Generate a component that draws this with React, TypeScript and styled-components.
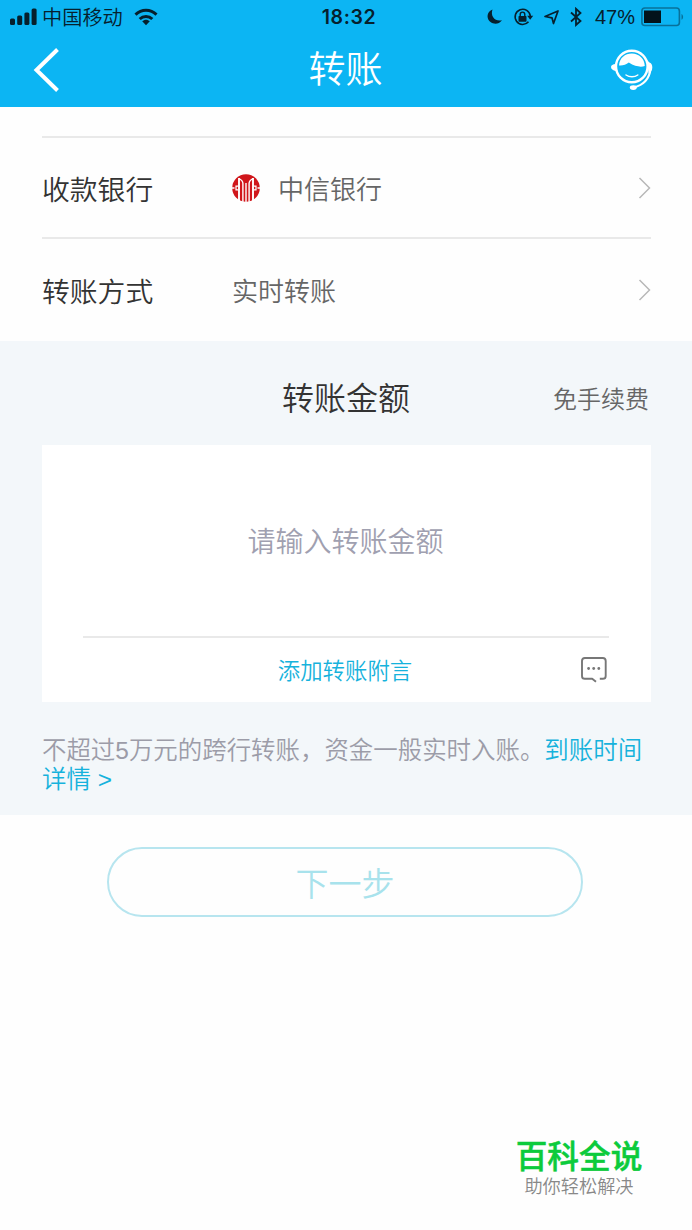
import React from "react";
import styled, { createGlobalStyle } from "styled-components";

const Global = createGlobalStyle`
  *, *::before, *::after { box-sizing: border-box; }
  body {
    margin: 0;
    background: #fff;
    font-family: "Noto Sans CJK SC", sans-serif;
    font-weight: 350;
  }
`;

const Screen = styled.div`
  width: 692px;
  height: 1230px;
  display: flex;
  flex-direction: column;
  background: #fefefe;
  overflow: hidden;
`;

const Header = styled.header`
  height: 107px;
  background: #0cb5f3;
`;

const StatusBar = styled.div`
  height: 34px;
  display: grid;
  grid-template-columns: 1fr auto 1fr;
  align-items: center;
  padding: 0 8px 0 10px;
  color: #06202d;
`;

const StatusGroup = styled.div<{ $end?: boolean }>`
  display: flex;
  align-items: center;
  justify-content: ${(p) => (p.$end ? "flex-end" : "flex-start")};
`;

const Carrier = styled.span`
  font-size: 20.2px;
  line-height: 34px;
  margin: 0 11px 0 4px;
  font-weight: 350;
`;

const Clock = styled.span`
  font: 600 19.5px/34px Inter, sans-serif;
  letter-spacing: 0.6px;
  padding-left: 4px;
`;

const Percent = styled.span`
  font: 400 20px/34px "Liberation Sans", sans-serif;
  margin: 0 6px 0 12px;
`;

const NavBar = styled.div`
  height: 70px;
  display: grid;
  grid-template-columns: 1fr auto 1fr;
  align-items: center;
  padding: 0 39px 0 33px;
`;

const Title = styled.h1`
  margin: 0;
  padding: 0 0 4px 5px;
  color: #fff;
  font-size: 37px;
  line-height: 66px;
  font-weight: 350;
`;

const NavIcon = styled.div<{ $end?: boolean }>`
  display: flex;
  padding-top: ${(p) => (p.$end ? 1 : 2)}px;
  justify-content: ${(p) => (p.$end ? "flex-end" : "flex-start")};
`;

const Form = styled.section`
  height: 234px;
  padding: 29px 41px 0 42px;
`;

const Row = styled.div`
  height: 101px;
  display: flex;
  align-items: center;
  border-top: 2px solid #e9e9e9;

  &:last-child {
    height: 103px;
  }
`;

const Label = styled.span`
  width: 190px;
  font-size: 27.8px;
  color: #333;
`;

const Value = styled.span`
  flex: 1;
  display: flex;
  align-items: center;
  gap: 18px;
  font-size: 26px;
  color: #666;
`;

const AmountSection = styled.section`
  height: 474px;
  padding: 0 41px 0 42px;
  background: #f3f7fa;
`;

const AmountHead = styled.div`
  height: 104px;
  display: grid;
  grid-template-columns: 1fr auto 1fr;
  align-items: center;
  padding: 6px 2px 0 1px;
`;

const AmountTitle = styled.h2`
  grid-column: 2;
  margin: 0;
  font-size: 32px;
  font-weight: 350;
  color: #333;
`;

const Fee = styled.span`
  justify-self: end;
  padding-top: 3px;
  font-size: 24px;
  color: #666;
`;

const Card = styled.div`
  height: 257px;
  padding: 0 42px 0 41px;
  background: #fff;
`;

const AmountField = styled.div`
  height: 193px;
  display: flex;
  align-items: center;
  justify-content: center;
  padding: 0 1px 1px 0;
  border-bottom: 2px solid #e9e9e9;
  font-size: 28px;
  color: #a0a0b0;
`;

const NoteRow = styled.div`
  height: 64px;
  display: grid;
  grid-template-columns: 1fr auto 1fr;
  align-items: center;
  padding-right: 2px;
`;

const NoteLink = styled.span`
  grid-column: 2;
  padding-bottom: 2px;
  font-size: 22.4px;
  color: #16b2dc;
`;

const NoteIcon = styled.span`
  display: flex;
  justify-self: end;
`;

const Hint = styled.p`
  margin: 34px -10px 0 0;
  font-family: "Liberation Sans", "Noto Sans CJK SC", sans-serif;
  font-size: 24.45px;
  line-height: 29px;
  color: #9c9ca8;
`;

const HintLink = styled.span`
  color: #16b2dc;
`;

const NextButton = styled.button`
  width: 476px;
  height: 70px;
  margin: 32px 0 0 107px;
  padding: 0 0 1px;
  border: 2px solid #b7e5ef;
  border-radius: 35px;
  background: transparent;
  color: #a8e2ec;
  font: 350 33px "Noto Sans CJK SC", sans-serif;
`;

const Brand = styled.footer`
  width: 126px;
  margin: auto 50px 34px auto;
  display: flex;
  flex-direction: column;
  align-items: center;
`;

const BrandName = styled.span`
  font-size: 31.7px;
  line-height: 40px;
  font-weight: 500;
  color: #0ccb3c;
  -webkit-text-stroke: 0.5px #0ccb3c;
  white-space: nowrap;
`;

const BrandLine = styled.span`
  font-size: 18.2px;
  line-height: 22px;
  color: #888;
  white-space: nowrap;
`;

const Chevron = () => (
  <svg width="13" height="24" viewBox="0 0 13 24" fill="none">
    <path d="M1.500 2L11.500 12L1.500 22" stroke="#b8b8b8" strokeWidth="1.500" />
  </svg>
);

const Signal = () => (
  <svg width="28" height="18" viewBox="0 0 28 18" fill="currentColor">
    <rect x="0" y="10.500" width="5" height="6.500" rx="1.500" />
    <rect x="7.200" y="7.500" width="5" height="9.500" rx="1.500" />
    <rect x="14.400" y="4.500" width="5" height="12.500" rx="1.500" />
    <rect x="21.600" y=".5" width="5" height="16.500" rx="1.500" />
  </svg>
);

const Wifi = () => (
  <svg width="24" height="18" viewBox="0 0 24 18" fill="none" stroke="currentColor" strokeWidth="3">
    <path d="M1.500 6.600C7.500 .8 16.500 .8 22.500 6.600" />
    <path d="M5.700 11C9.300 7.500 14.700 7.500 18.300 11" />
    <path d="M8.200 13.300C10.400 11.200 13.600 11.200 15.800 13.300L12 17.300Z" fill="currentColor" stroke="none" />
  </svg>
);

const StatusIcons = () => (
  <svg width="96" height="20" viewBox="0 0 96 20" fill="none" stroke="currentColor">
    <path d="M5.500 2.500C1.500 4 0 7.500 .8 11C2 16.500 10.500 19.300 15 13.200C8.500 15 3 9.500 5.500 2.500Z" fill="currentColor" stroke="none" />
    <path d="M41.500 14.800A7.600 7.600 0 1 1 43.300 9" strokeWidth="1.600" />
    <path d="M40.200 8.800H46.200L43.200 12.800Z" fill="currentColor" stroke="none" />
    <rect x="31.500" y="9" width="8" height="5.800" rx=".7" fill="currentColor" stroke="none" />
    <path d="M33.200 9.500V7.400A2.300 2.300 0 0 1 37.800 7.400V9.500" strokeWidth="1.400" />
    <path d="M58 9.500L71 4L66.500 16.500L65 10.800Z" strokeWidth="1.700" strokeLinejoin="round" />
    <path d="M84 5.500L93.500 14L89 18V1.800L93.500 6L84 14.500" strokeWidth="1.800" />
  </svg>
);

const Battery = () => (
  <svg width="43" height="20" viewBox="0 0 43 20" fill="none">
    <rect x=".9" y="1" width="37.500" height="17.500" rx="3" stroke="#08719a" strokeWidth="1.600" />
    <rect x="3" y="3.500" width="17" height="12.500" fill="#03131b" />
    <path d="M40.500 7C42.600 7.800 42.600 12 40.500 12.800Z" fill="#08719a" />
  </svg>
);

const Back = () => (
  <svg width="28" height="44" viewBox="0 0 28 44" fill="none">
    <path d="M24.500 1.500L3.500 22L24.500 42.500" stroke="#fff" strokeWidth="4" />
  </svg>
);

const Service = () => (
  <svg width="42" height="42" viewBox="0 0 42 42" fill="none">
    <circle cx="20.800" cy="17.500" r="15.800" stroke="#fff" strokeWidth="2.400" />
    <path d="M8 16.500C8.500 9 14 4.600 20.800 4.600C28 4.600 33.500 9.500 33.800 17C30.500 18.200 24.500 18 17.800 13.600C15 16 11.500 16.800 8 16.500Z" fill="#fff" />
    <path d="M15 26C18.500 28.400 23.500 28.400 26.800 26" stroke="#fff" strokeWidth="1.500" strokeLinecap="round" />
    <path d="M5.500 12.500L4.500 15C2 15.200 0 16.200 0 18C0 20 2 21.500 4.800 22L6 24Z" fill="#fff" />
    <path d="M36 11L38.500 13.500C40.700 14.500 41.300 16 41.300 18.500C41.300 21.500 40 23.200 37.500 24Z" fill="#fff" />
    <path d="M39.500 20C38.500 29 33 36 22.500 38.500" stroke="#fff" strokeWidth="2.200" />
    <ellipse cx="22.300" cy="38.600" rx="3.500" ry="2.400" fill="#fff" />
  </svg>
);

const BankLogo = () => (
  <svg width="28" height="28" viewBox="0 0 28 28">
    <circle cx="14" cy="14" r="13.800" fill="#d0161b" />
    <g fill="none" stroke="#fff" strokeWidth="1.400">
      <path d="M7 28V4M21 28V4" strokeWidth="1.900" />
      <path d="M10.900 28V9.500Q10.900 6.500 7 4.500M17.100 28V9.500Q17.100 6.500 21 4.500" />
      <path d="M14 28V9" />
      <path d="M0 14H2.500M28 14H25.500" strokeWidth="1.600" />
      <path d="M6.500 12.200H4V15.800H6.500M21.500 12.200H24V15.800H21.500" strokeWidth="1.200" />
    </g>
  </svg>
);

const Message = () => (
  <svg width="26" height="26" viewBox="0 0 26 26" fill="none">
    <path d="M18.800 21.800H21.800Q24.700 21.800 24.700 18.900V3.900Q24.700 1 21.800 1H3.900Q1 1 1 3.900V18.900Q1 21.800 3.900 21.800H11.200L15 24.800" stroke="#777" strokeWidth="1.900" strokeLinejoin="round" />
    <g fill="#777">
      <circle cx="7.600" cy="11.500" r="1.400" />
      <circle cx="12.700" cy="11.500" r="1.400" />
      <circle cx="17.800" cy="11.500" r="1.400" />
    </g>
  </svg>
);

export default function App() {
  return (
    <Screen>
      <Global />
      <Header>
        <StatusBar>
          <StatusGroup>
            <Signal />
            <Carrier>中国移动</Carrier>
            <Wifi />
          </StatusGroup>
          <Clock>18:32</Clock>
          <StatusGroup $end>
            <StatusIcons />
            <Percent>47%</Percent>
            <Battery />
          </StatusGroup>
        </StatusBar>
        <NavBar>
          <NavIcon><Back /></NavIcon>
          <Title>转账</Title>
          <NavIcon $end><Service /></NavIcon>
        </NavBar>
      </Header>
      <Form>
        <Row>
          <Label>收款银行</Label>
          <Value><BankLogo />中信银行</Value>
          <Chevron />
        </Row>
        <Row>
          <Label>转账方式</Label>
          <Value>实时转账</Value>
          <Chevron />
        </Row>
      </Form>
      <AmountSection>
        <AmountHead>
          <AmountTitle>转账金额</AmountTitle>
          <Fee>免手续费</Fee>
        </AmountHead>
        <Card>
          <AmountField>请输入转账金额</AmountField>
          <NoteRow>
            <NoteLink>添加转账附言</NoteLink>
            <NoteIcon><Message /></NoteIcon>
          </NoteRow>
        </Card>
        <Hint>
          不超过5万元的跨行转账，资金一般实时入账。<HintLink>到账时间<br />详情 &gt;</HintLink>
        </Hint>
      </AmountSection>
      <NextButton>下一步</NextButton>
      <Brand>
        <BrandName>百科全说</BrandName>
        <BrandLine>助你轻松解决</BrandLine>
      </Brand>
    </Screen>
  );
}
